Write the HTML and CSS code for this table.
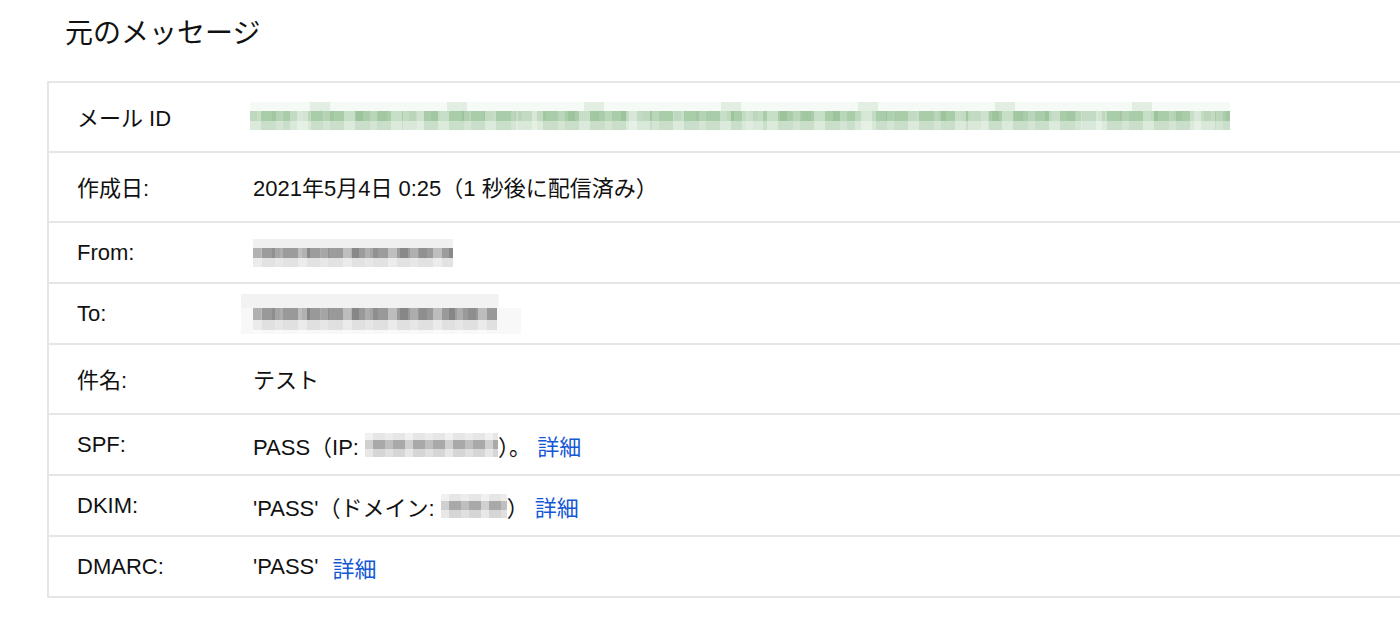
FILE: index.html
```html
<!DOCTYPE html>
<html lang="ja">
<head>
<meta charset="utf-8">
<link rel="stylesheet" href="styles.css">
</head>
<body>
<div class="page">
  <h1 class="title">元のメッセージ</h1>
  <div class="table">
    <div class="row tall">
      <div class="label">メール ID</div>
      <div class="value"><span class="blur blur-green" style="width:980px"></span></div>
    </div>
    <div class="row tall">
      <div class="label">作成日:</div>
      <div class="value">2021年5月4日 0:25（1 秒後に配信済み）</div>
    </div>
    <div class="row">
      <div class="label">From:</div>
      <div class="value"><span class="blur blur-gray" style="width:200px"></span></div>
    </div>
    <div class="row">
      <div class="label">To:</div>
      <div class="value"><span class="blur blur-gray blur-to" style="width:280px"></span></div>
    </div>
    <div class="row tall">
      <div class="label">件名:</div>
      <div class="value">テスト</div>
    </div>
    <div class="row">
      <div class="label">SPF:</div>
      <div class="value">PASS（IP: <span class="blur blur-gray blur-small" style="width:133px"></span>）。 <a class="link" href="#">詳細</a></div>
    </div>
    <div class="row">
      <div class="label">DKIM:</div>
      <div class="value">'PASS'（ドメイン: <span class="blur blur-gray blur-small" style="width:66px"></span>） <a class="link" href="#">詳細</a></div>
    </div>
    <div class="row">
      <div class="label">DMARC:</div>
      <div class="value">'PASS' <a class="link link-gap" href="#">詳細</a></div>
    </div>
  </div>
</div>
</body>
</html>
```

FILE: styles.css
```css
html, body {
  margin: 0;
  padding: 0;
  background: #ffffff;
}

body {
  font-family: "Liberation Sans", Arial, "Noto Sans CJK JP", sans-serif;
  color: #111111;
}

.page {
  padding: 11px 0 0 47px;
  overflow: hidden;
}

.title {
  margin: 0 0 30px 18px;
  font-size: 28px;
  font-weight: normal;
  line-height: 40px;
  color: #111111;
  font-family: "Noto Sans CJK JP", sans-serif;
}

.table {
  border-left: 2px solid #e6e6e6;
  border-bottom: 2px solid #e6e6e6;
  width: 1400px;
}

.row {
  display: flex;
  align-items: center;
  height: 61px;
  box-sizing: border-box;
  border-top: 2px solid #e6e6e6;
  font-size: 22px;
}

.row.tall {
  height: 70px;
  padding-bottom: 2px;
}

.label {
  width: 204px;
  padding-left: 28px;
  box-sizing: border-box;
  flex: none;
}

.value {
  display: flex;
  align-items: center;
  white-space: pre;
}

.link {
  color: #1558d6;
  text-decoration: none;
}

.link-gap {
  margin-left: 8px;
}

.blur {
  display: inline-block;
  height: 28px;
  vertical-align: middle;
}

.blur-green {
  margin-left: -3px;
  background:
    repeating-linear-gradient(90deg, rgba(255,255,255,0.35) 0 11px, rgba(255,255,255,0) 11px 26px, rgba(255,255,255,0.2) 26px 33px, rgba(255,255,255,0) 33px 47px) 0 9px / 100% 20px no-repeat,
    repeating-linear-gradient(90deg, rgba(255,255,255,0) 0 40px, rgba(255,255,255,0.3) 40px 61px, rgba(255,255,255,0) 61px 113px) 0 9px / 100% 20px no-repeat,
    repeating-linear-gradient(90deg, rgba(120,170,120,0.25) 0 7px, rgba(120,170,120,0) 7px 22px, rgba(120,170,120,0.15) 22px 31px, rgba(120,170,120,0) 31px 53px) 0 9px / 100% 10px no-repeat,
    repeating-linear-gradient(90deg, rgba(255,255,255,0) 0 60px, rgba(220,235,220,0.8) 60px 80px, rgba(255,255,255,0) 80px 137px) 0 0 / 100% 9px no-repeat,
    linear-gradient(#f6faf6, #f6faf6) 0 0 / 100% 9px no-repeat,
    linear-gradient(#a9cca9, #a9cca9) 0 9px / 100% 10px no-repeat,
    linear-gradient(#c9dfc9, #c9dfc9) 0 19px / 100% 10px no-repeat;
}

.blur-gray {
  background:
    repeating-linear-gradient(90deg, rgba(255,255,255,0.35) 0 9px, rgba(255,255,255,0) 9px 22px, rgba(255,255,255,0.2) 22px 30px, rgba(255,255,255,0) 30px 45px) 0 9px / 100% 20px no-repeat,
    repeating-linear-gradient(90deg, rgba(80,80,80,0.25) 0 8px, rgba(80,80,80,0) 8px 19px, rgba(80,80,80,0.15) 19px 27px, rgba(80,80,80,0) 27px 49px) 0 9px / 100% 10px no-repeat,
    linear-gradient(#f0f0f0, #f0f0f0) 0 0 / 100% 9px no-repeat,
    linear-gradient(#9c9c9c, #9c9c9c) 0 9px / 100% 10px no-repeat,
    linear-gradient(#e2e2e2, #e2e2e2) 0 19px / 100% 10px no-repeat;
}

.blur-to {
  height: 40px;
  margin-left: -12px;
  background:
    repeating-linear-gradient(90deg, rgba(255,255,255,0.35) 0 9px, rgba(255,255,255,0) 9px 22px, rgba(255,255,255,0.2) 22px 30px, rgba(255,255,255,0) 30px 45px) 12px 14px / 244px 26px no-repeat,
    repeating-linear-gradient(90deg, rgba(80,80,80,0.25) 0 8px, rgba(80,80,80,0) 8px 19px, rgba(80,80,80,0.15) 19px 27px, rgba(80,80,80,0) 27px 49px) 12px 14px / 244px 12px no-repeat,
    linear-gradient(#f2f2f2, #f2f2f2) 0 0 / 92% 14px no-repeat,
    linear-gradient(#999999, #999999) 12px 14px / 244px 12px no-repeat,
    linear-gradient(#e0e0e0, #e0e0e0) 12px 26px / 244px 10px no-repeat,
    linear-gradient(#f8f8f8, #f8f8f8) 0 14px / 100% 26px no-repeat;
}

.blur-small {
  height: 24px;
  background:
    repeating-linear-gradient(90deg, rgba(255,255,255,0.45) 0 8px, rgba(255,255,255,0) 8px 20px, rgba(255,255,255,0.25) 20px 28px, rgba(255,255,255,0) 28px 40px) 0 0 / 100% 100% no-repeat,
    linear-gradient(#e6e6e6, #e6e6e6) 0 0 / 100% 7px no-repeat,
    linear-gradient(#a9a9a9, #a9a9a9) 0 7px / 100% 9px no-repeat,
    linear-gradient(#d6d6d6, #d6d6d6) 0 16px / 100% 8px no-repeat;
}
```
